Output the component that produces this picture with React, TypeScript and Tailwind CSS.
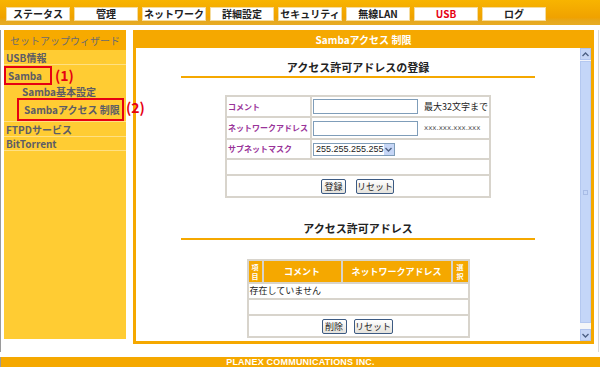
import React from 'react';

const font = { fontFamily: '"Noto Sans CJK JP", "Liberation Sans", sans-serif' };

const tabs = ['ステータス', '管理', 'ネットワーク', '詳細設定', 'セキュリティ', '無線LAN', 'USB', 'ログ'];

const Btn = ({ children, w }: { children: React.ReactNode; w: string }) => (
  <button
    className={`${w} h-[15px] p-0 whitespace-nowrap rounded-[2px] border border-[#3c5a82] bg-[linear-gradient(#ffffff,#e4e2dc)] text-[9px] leading-[13px] text-[#222]`}
  >
    {children}
  </button>
);

const Chevron = ({ down }: { down?: boolean }) => (
  <svg width="7" height="5" viewBox="0 0 7 5">
    <path d={down ? 'M0.5 1 L3.5 4 L6.5 1' : 'M0.5 4 L3.5 1 L6.5 4'} fill="none" stroke="#4d6185" strokeWidth="1.4" />
  </svg>
);

function Scrollbar() {
  return (
    <div className="w-[11px] flex flex-col bg-[#f2f4fa]">
      <div className="h-[12px] bg-[#c6d6f6] border border-[#b0c4ee] flex items-center justify-center">
        <Chevron />
      </div>
      <div className="flex-1 mt-[1px] bg-[#c4d6f8] border border-[#b4c8f0] flex items-center justify-center">
        <div className="w-[5px] h-[5px] border border-[#a8bce6]" />
      </div>
      <div className="h-[6px] bg-[#f4f6f8]" />
      <div className="h-[12px] bg-[#c6d6f6] border border-[#b0c4ee] flex items-center justify-center">
        <Chevron down />
      </div>
    </div>
  );
}

export default function App() {
  const cell = 'border-2 border-[#d8d4cc]';
  const label = `${cell} pl-[1px] font-bold text-[#993399] text-[8px] whitespace-nowrap overflow-hidden`;
  const stacked = `${cell} text-center text-[7px] leading-[9px] p-0`;
  return (
    <div className="w-[600px] h-[367px] bg-white overflow-hidden" style={font}>
      {/* top navigation */}
      <div className="h-[25px] bg-[linear-gradient(#f8b400_0%,#f0a200_70%,#e6a81e_84%,#e8ac24_100%)] flex gap-[4px] pl-[6px] pt-[7px]">
        {tabs.map((t) => (
          <div
            key={t}
            className={`w-[64px] h-[14px] bg-white border border-[#f4dca0] flex items-center justify-center text-[10px] font-bold leading-none ${
              t === 'USB' ? 'text-[#e60012]' : 'text-[#222]'
            }`}
          >
            {t}
          </div>
        ))}
      </div>

      {/* body */}
      <div className="flex mt-[5px] pl-[3px] border-l border-[#9a9a9a] h-[322px] relative">
        {/* sidebar */}
        <div className="w-[122px] h-[309px] bg-[#ffcc33] flex flex-col text-[10px] font-bold text-[#5c5c66]">
          <div className="h-[20px] shrink-0 bg-[#f7aa00] flex items-center justify-center font-normal text-[#6a6a70]">
            セットアップウィザード
          </div>
          <div className="h-[15px] shrink-0 flex items-center pl-[2px] border-b border-[#ffe083]">USB情報</div>
          <div className="flex flex-col border-b border-[#ffe083] shrink-0">
            <div className="h-[19px] flex items-center mt-[1px]">
              <span className="h-[19px] w-[48px] border-2 border-[#e60012] flex items-center pl-[2px] leading-[12px]">Samba</span>
            </div>
            <div className="h-[13px] flex items-center pl-[18px] leading-[11px]">Samba基本設定</div>
            <div className="flex pl-[13px]">
              <span className="h-[23px] w-[107px] border-2 border-[#e60012] flex items-center pl-[5px] leading-[12px]">Sambaアクセス 制限</span>
            </div>
          </div>
          <div className="h-[15px] shrink-0 flex items-center pl-[2px] border-b border-[#ffe083]">FTPDサービス</div>
          <div className="h-[14px] shrink-0 flex items-center pl-[2px] border-b border-[#ffe083]">BitTorrent</div>
        </div>

        {/* annotations */}
        <span className="absolute left-[54px] top-[38px] text-[14px] font-bold text-[#e60012] leading-none">(1)</span>
        <span className="absolute left-[125px] top-[70px] text-[14px] font-bold text-[#e60012] leading-none">(2)</span>

        {/* main panel */}
        <div className="ml-[7px] w-[461px] h-[314px] bg-[#f5a800] flex flex-col px-[3px] pb-[3px]">
          <div className="h-[18px] shrink-0 flex items-center justify-center text-white text-[10px] font-bold">
            Sambaアクセス 制限
          </div>
          <div className="flex-1 bg-white flex">
            <div className="flex-1 flex flex-col items-center text-[9px] text-[#222]">
              <div className="mt-[12px] h-[14px] leading-[14px] font-bold text-[11px]">アクセス許可アドレスの登録</div>
              <div className="mt-[2px] w-[354px] h-[2px] bg-[#f5a800]" />

              <table className="mt-[17px] w-[266px] table-fixed border-collapse">
                <colgroup>
                  <col className="w-[85px]" />
                  <col />
                </colgroup>
                <tbody>
                  <tr className="h-[21px]">
                    <td className={label}>コメント</td>
                    <td className={`${cell} pl-[1px]`}>
                      <div className="flex items-center gap-[6px]">
                        <div className="w-[105px] h-[15px] shrink-0 border border-[#7f9db9] bg-white" />
                        <span className="whitespace-nowrap">最大32文字まで</span>
                      </div>
                    </td>
                  </tr>
                  <tr className="h-[22px]">
                    <td className={label}>ネットワークアドレス</td>
                    <td className={`${cell} pl-[1px]`}>
                      <div className="flex items-center gap-[6px]">
                        <div className="w-[105px] h-[15px] shrink-0 border border-[#7f9db9] bg-white" />
                        <span className="whitespace-nowrap text-[7px] text-[#555]" style={{ fontFamily: '"DejaVu Sans", sans-serif' }}>
                          xxx.xxx.xxx.xxx
                        </span>
                      </div>
                    </td>
                  </tr>
                  <tr className="h-[20px]">
                    <td className={label}>サブネットマスク</td>
                    <td className={`${cell} pl-[1px]`}>
                      <div className="w-[82px] h-[13px] border border-[#7f9db9] flex items-center bg-white">
                        <span className="flex-1 pl-[2px] text-[9px] leading-none text-[#222]" style={{ fontFamily: '"Liberation Sans", sans-serif' }}>
                          255.255.255.255
                        </span>
                        <span className="w-[12px] h-[11px] bg-[#c6d6f6] flex items-center justify-center">
                          <Chevron down />
                        </span>
                      </div>
                    </td>
                  </tr>
                  <tr className="h-[16px]">
                    <td colSpan={2} className={cell} />
                  </tr>
                  <tr className="h-[22px]">
                    <td colSpan={2} className={cell}>
                      <div className="flex justify-center gap-[10px] pr-[1px]">
                        <Btn w="w-[25px]">登録</Btn>
                        <Btn w="w-[38px]">リセット</Btn>
                      </div>
                    </td>
                  </tr>
                </tbody>
              </table>

              <div className="mt-[23px] h-[14px] leading-[14px] font-bold text-[11px]">アクセス許可アドレス</div>
              <div className="mt-[3px] w-[354px] h-[2px] bg-[#f5a800]" />

              <table className="mt-[19px] w-[223px] table-fixed border-collapse">
                <colgroup>
                  <col className="w-[15px]" />
                  <col className="w-[79px]" />
                  <col className="w-[110px]" />
                  <col />
                </colgroup>
                <tbody>
                  <tr className="h-[23px] bg-[#f5a800] text-white font-bold">
                    <td className={stacked}>
                      <div>項</div>
                      <div>目</div>
                    </td>
                    <td className={`${cell} text-center`}>コメント</td>
                    <td className={`${cell} text-center`}>ネットワークアドレス</td>
                    <td className={stacked}>
                      <div>選</div>
                      <div>択</div>
                    </td>
                  </tr>
                  <tr className="h-[16px]">
                    <td colSpan={4} className={`${cell} pl-[1px]`}>存在していません</td>
                  </tr>
                  <tr className="h-[16px]">
                    <td colSpan={4} className={cell} />
                  </tr>
                  <tr className="h-[22px]">
                    <td colSpan={4} className={cell}>
                      <div className="flex justify-center gap-[7px] pr-[2px]">
                        <Btn w="w-[25px]">削除</Btn>
                        <Btn w="w-[39px]">リセット</Btn>
                      </div>
                    </td>
                  </tr>
                </tbody>
              </table>
            </div>
            <Scrollbar />
          </div>
        </div>
        <div className="ml-auto mr-[1px] w-px h-full bg-[#d8d8d8]" />
      </div>

      {/* footer */}
      <div
        className="mt-[5px] h-[11px] bg-[#f5a800] border-l border-[#9a9a9a] flex items-center justify-center text-white text-[9px] font-bold leading-none tracking-[0.2px]"
        style={{ fontFamily: '"Liberation Sans Narrow", "Liberation Sans", sans-serif' }}
      >
        PLANEX COMMUNICATIONS INC.
      </div>
    </div>
  );
}
